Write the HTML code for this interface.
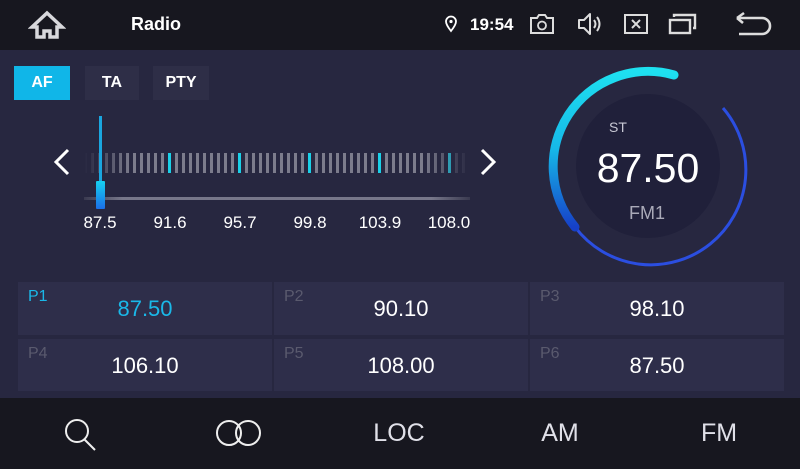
<!DOCTYPE html>
<html><head><meta charset="utf-8"><style>
*{margin:0;padding:0;box-sizing:border-box}
body{width:800px;height:469px;background:#272740;font-family:"Liberation Sans",sans-serif;position:relative;overflow:hidden;color:#fff}
.top{position:absolute;left:0;top:0;width:800px;height:50px;background:#17171f}
.bot{position:absolute;left:0;top:398px;width:800px;height:71px;background:#17171f}
.abs{position:absolute}
.btn{position:absolute;top:66px;height:34px;font-weight:bold;font-size:16px;line-height:34px;text-align:center;background:#2e2e47}
.ticks{position:absolute;left:84px;top:153px;width:386px;height:20px;background:repeating-linear-gradient(90deg,#7c7c8c 0 3px,transparent 3px 7px);-webkit-mask-image:linear-gradient(90deg,transparent,#000 12%,#000 88%,transparent);mask-image:linear-gradient(90deg,transparent,#000 12%,#000 88%,transparent)}
.hl{position:absolute;top:153px;width:3px;height:20px;background:#1ad0e8}
.lbl{position:absolute;top:213px;font-size:17px;width:60px;text-align:center}
.p{position:absolute;background:#2e2e4a;width:254px}
.p .n{position:absolute;left:10px;top:6px;font-size:16px;color:#5a5a6e}
.p .f{position:absolute;left:0;width:254px;text-align:center;top:14px;font-size:22px}
.bl{position:absolute;top:419px;font-size:25px;color:#e0e0e8;width:100px;text-align:center}
</style></head><body>
<div class="top"></div>
<svg class="abs" style="left:28px;top:10px" width="38" height="30" viewBox="0 0 38 30"><path d="M19 3 L4 17 H9 V27 H16 V21 H22 V27 H29 V17 H34 Z" fill="none" stroke="#d8d8dc" stroke-width="3.5" stroke-linejoin="miter"/></svg>
<div class="abs" style="left:131px;top:14px;font-size:18px;font-weight:bold">Radio</div>
<svg class="abs" style="left:444px;top:15px" width="14" height="18" viewBox="0 0 14 18"><path d="M7 16 C3 11 2 8.5 2 6.5 A5 5 0 0 1 12 6.5 C12 8.5 11 11 7 16Z" fill="none" stroke="#fff" stroke-width="1.8"/><circle cx="7" cy="6.5" r="1.6" fill="#fff"/></svg>
<div class="abs" style="left:470px;top:15px;font-size:17px;font-weight:bold">19:54</div>
<svg class="abs" style="left:529px;top:12px" width="26" height="24" viewBox="0 0 26 24"><path d="M2 6 H8 L10 3 H16 L18 6 H24 V21 H2 Z" fill="none" stroke="#ddd" stroke-width="2"/><circle cx="13" cy="13.5" r="4" fill="none" stroke="#ddd" stroke-width="1.8"/></svg>
<svg class="abs" style="left:576px;top:12px" width="28" height="24" viewBox="0 0 28 24"><path d="M3 8 H8 L14 2 V22 L8 16 H3 Z" fill="none" stroke="#ddd" stroke-width="2" stroke-linejoin="round"/><path d="M18 8 Q21 12 18 16 M21 5 Q26 12 21 19" fill="none" stroke="#ddd" stroke-width="2"/></svg>
<svg class="abs" style="left:623px;top:13px" width="26" height="22" viewBox="0 0 26 22"><rect x="2" y="2" width="22" height="18" fill="none" stroke="#ddd" stroke-width="2"/><path d="M9 7 L17 15 M17 7 L9 15" stroke="#ddd" stroke-width="2"/></svg>
<svg class="abs" style="left:668px;top:12px" width="30" height="24" viewBox="0 0 30 24"><rect x="2" y="8" width="20" height="13" fill="none" stroke="#ddd" stroke-width="2.4"/><path d="M6 5 V3 H27 V16 H25" fill="none" stroke="#ddd" stroke-width="2.4"/></svg>
<svg class="abs" style="left:734px;top:11px" width="40" height="26" viewBox="0 0 40 26"><path d="M3 7 H28 A8 8 0 0 1 28 23 H5" fill="none" stroke="#ddd" stroke-width="2.6"/><path d="M3 7 L10 2 M3 7 L9 12" stroke="#ddd" stroke-width="2.6" fill="none"/></svg>

<div class="btn" style="left:14px;width:56px;background:#10b6e8">AF</div>
<div class="btn" style="left:85px;width:54px">TA</div>
<div class="btn" style="left:153px;width:56px">PTY</div>

<svg class="abs" style="left:50px;top:148px" width="24" height="30" viewBox="0 0 24 30"><path d="M18 2 L6 14 L18 26" fill="none" stroke="#fff" stroke-width="3"/></svg>
<svg class="abs" style="left:476px;top:148px" width="24" height="30" viewBox="0 0 24 30"><path d="M6 2 L18 14 L6 26" fill="none" stroke="#fff" stroke-width="3"/></svg>
<div class="ticks"></div>
<div class="hl" style="left:168px"></div><div class="hl" style="left:238px"></div><div class="hl" style="left:308px"></div><div class="hl" style="left:378px"></div><div class="hl" style="left:448px;opacity:.6"></div>
<div class="abs" style="left:84px;top:197px;width:386px;height:3px;background:linear-gradient(90deg,#3a3a50,#77778a 10%,#77778a 90%,#3a3a50)"></div>
<div class="abs" style="left:99px;top:116px;width:3px;height:66px;background:#1aa6e0"></div>
<div class="abs" style="left:96px;top:181px;width:9px;height:28px;background:linear-gradient(#16d0f0,#1a6ee8);border-radius:1px"></div>
<div class="lbl" style="left:70px">87.5</div><div class="lbl" style="left:140px">91.6</div><div class="lbl" style="left:210px">95.7</div><div class="lbl" style="left:280px">99.8</div><div class="lbl" style="left:350px">103.9</div><div class="lbl" style="left:419px">108.0</div>

<svg class="abs" style="left:540px;top:60px" width="220" height="210" viewBox="540 60 220 210">
<defs><linearGradient id="g" x1="0" y1="0" x2="0" y2="1"><stop offset="0" stop-color="#1ee0f0"/><stop offset="0.5" stop-color="#16b8e8"/><stop offset="1" stop-color="#1640c8"/></linearGradient></defs>
<circle cx="648" cy="166" r="72" fill="#20203a"/>
<path d="M723 108 A95 95 0 1 1 575 227" fill="none" stroke="#2b4ee0" stroke-width="3"/>
<path d="M674 75 A95 95 0 0 0 575 227" fill="none" stroke="url(#g)" stroke-width="9" stroke-linecap="round"/>
<text x="609" y="132" font-size="14" fill="#c8c8d4" font-family="Liberation Sans">ST</text>
<text x="648" y="182" font-size="41" fill="#fff" text-anchor="middle" font-family="Liberation Sans">87.50</text>
<text x="647" y="219" font-size="18" fill="#aaaab8" text-anchor="middle" font-family="Liberation Sans">FM1</text>
</svg>

<div class="p" style="left:18px;top:282px;height:53px"><span class="n" style="color:#1ab8e8">P1</span><span class="f" style="color:#1ab8e8">87.50</span></div>
<div class="p" style="left:274px;top:282px;height:53px"><span class="n">P2</span><span class="f">90.10</span></div>
<div class="p" style="left:530px;top:282px;height:53px"><span class="n">P3</span><span class="f">98.10</span></div>
<div class="p" style="left:18px;top:339px;height:52px"><span class="n">P4</span><span class="f">106.10</span></div>
<div class="p" style="left:274px;top:339px;height:52px"><span class="n">P5</span><span class="f">108.00</span></div>
<div class="p" style="left:530px;top:339px;height:52px"><span class="n">P6</span><span class="f">87.50</span></div>

<div class="bot"></div>
<svg class="abs" style="left:62px;top:416px" width="36" height="36" viewBox="0 0 36 36"><circle cx="15" cy="15" r="11" fill="none" stroke="#eee" stroke-width="2"/><path d="M22 23 L33 34" stroke="#eee" stroke-width="2"/></svg>
<svg class="abs" style="left:214px;top:418px" width="50" height="30" viewBox="0 0 50 30"><circle cx="15" cy="15" r="12" fill="none" stroke="#eee" stroke-width="2"/><circle cx="34" cy="15" r="12" fill="none" stroke="#eee" stroke-width="2"/></svg>
<div class="bl" style="left:349px">LOC</div>
<div class="bl" style="left:510px">AM</div>
<div class="bl" style="left:669px">FM</div>
</body></html>
